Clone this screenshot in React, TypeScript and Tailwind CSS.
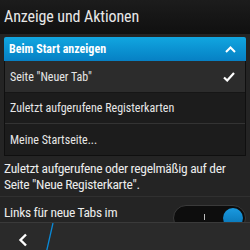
export default function App() {
  return (
    <div className="w-[250px] h-[250px] overflow-hidden bg-[#242424] text-white flex flex-col font-['Roboto_Condensed',Roboto,sans-serif]">
      <div className="h-[34px] shrink-0 bg-gradient-to-b from-[#1c1c1c] to-[#101010] px-[4px] flex items-center">
        <span className="text-[16px] text-[#e8e8e8] tracking-[-0.1px]">Anzeige und Aktionen</span>
      </div>
      <div className="px-[4px] pt-[3px]">
        <div className="h-[24px] rounded-t-[2px] bg-gradient-to-b from-[#11a6e0] to-[#0780c4] flex items-center justify-between pl-[5px] pr-[10px]">
          <span className="text-[12px] font-bold text-white">Beim Start anzeigen</span>
          <svg width="11" height="7" viewBox="0 0 11 7">
            <path d="M1 6 L5.5 1.5 L10 6" fill="none" stroke="#fff" strokeWidth="2" />
          </svg>
        </div>
        <div className="border-x border-b border-[#0f0f0f]">
          <div className="h-[32px] bg-[#2c2c2c] flex items-center justify-between pl-[5px] pr-[10px] border-b border-[#161616]">
            <span className="text-[12px] text-[#e6e6e6]">Seite "Neuer Tab"</span>
            <svg width="12" height="10" viewBox="0 0 12 10">
              <path d="M1 5.5 L4.2 8.5 L11 1" fill="none" stroke="#fff" strokeWidth="2.2" />
            </svg>
          </div>
          <div className="h-[31px] bg-[#1c1c1c] flex items-center pl-[5px] border-b border-[#333]">
            <span className="text-[12px] text-[#e6e6e6]">Zuletzt aufgerufene Registerkarten</span>
          </div>
          <div className="h-[31px] bg-[#1c1c1c] flex items-center pl-[5px]">
            <span className="text-[12px] text-[#e6e6e6]">Meine Startseite...</span>
          </div>
        </div>
      </div>
      <div className="px-[4px] pt-[4px] text-[13.5px] leading-[16px] text-[#ececec] tracking-[-0.3px]">
        Zuletzt aufgerufene oder regelmäßig auf der Seite "Neue Registerkarte".
      </div>
      <div className="mt-[4px] border-t border-[#303030] flex-1 relative">
        <div className="px-[4px] pt-[5px] text-[13.5px] text-[#ececec] tracking-[-0.3px]">Links für neue Tabs im</div>
        <div className="absolute left-[173px] top-[8px] w-[73px] h-[26px] rounded-full bg-[#0d0d0d] border border-[#3a3a3a] flex items-center justify-end pr-[2px]">
          <div className="absolute left-[30px] top-[8px] w-[1px] h-[6px] bg-[#bbb]" />
          <div className="w-[20px] h-[20px] rounded-full bg-gradient-to-b from-[#1a9ae0] to-[#0670b0]" />
        </div>
      </div>
      <div className="h-[35px] shrink-0 bg-[#2a2a2a] border-t border-[#3a3a3a] relative z-10 flex items-center">
        <svg className="ml-[18px]" width="10" height="14" viewBox="0 0 10 14">
          <path d="M8 1.5 L2.5 7 L8 12.5" fill="none" stroke="#fff" strokeWidth="2.4" />
        </svg>
        <svg className="absolute left-[40px] top-0" width="20" height="35" viewBox="0 0 20 35">
          <path d="M13 0 L5 35" stroke="#0a8ad8" strokeWidth="1.3" />
        </svg>
      </div>
    </div>
  );
}
